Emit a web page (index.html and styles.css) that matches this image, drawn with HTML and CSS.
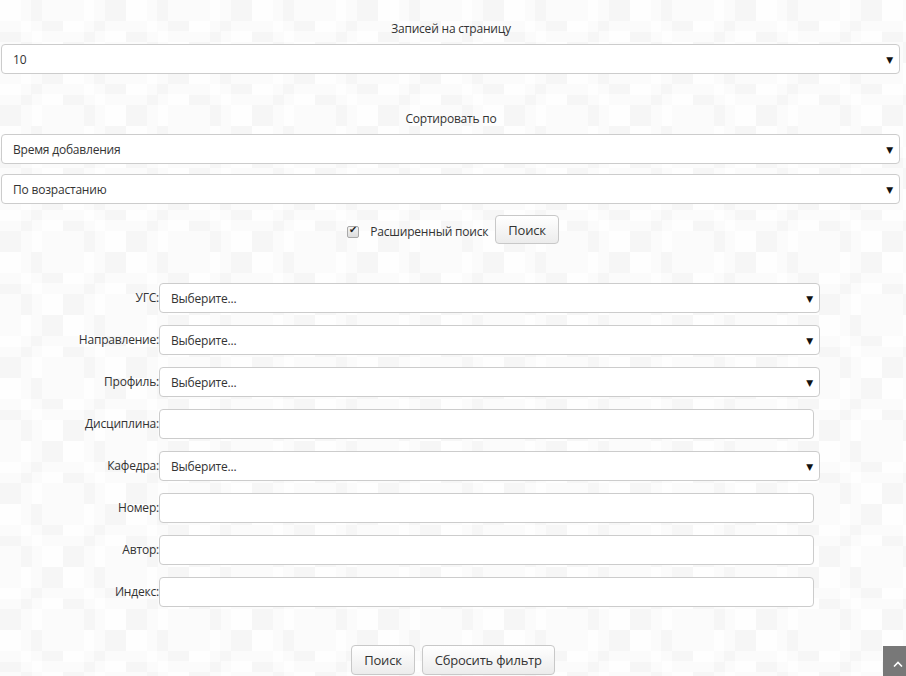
FILE: index.html
```html
<!DOCTYPE html>
<html lang="ru">
<head>
<meta charset="UTF-8">
<title>Поиск</title>
<link rel="stylesheet" href="styles.css">
</head>
<body>

<div class="page">
  <!-- Records per page -->
  <div class="caption">Записей на страницу</div>
  <div class="select wide"><span>10</span><span class="arrow">&#9660;</span></div>

  <!-- Sorting -->
  <div class="caption sort-caption">Сортировать по</div>
  <div class="select wide"><span>Время добавления</span><span class="arrow">&#9660;</span></div>
  <div class="select wide second"><span>По возрастанию</span><span class="arrow">&#9660;</span></div>

  <div class="adv-row">
    <label class="adv-check"><input type="checkbox" checked> Расширенный поиск</label>
    <button class="btn">Поиск</button>
  </div>

  <!-- Advanced filter -->
  <div class="filter">
    <div class="row">
      <label>УГС:</label>
      <div class="select field"><span>Выберите...</span><span class="arrow">&#9660;</span></div>
    </div>
    <div class="row">
      <label>Направление:</label>
      <div class="select field"><span>Выберите...</span><span class="arrow">&#9660;</span></div>
    </div>
    <div class="row">
      <label>Профиль:</label>
      <div class="select field"><span>Выберите...</span><span class="arrow">&#9660;</span></div>
    </div>
    <div class="row">
      <label>Дисциплина:</label>
      <input type="text" class="text-field">
    </div>
    <div class="row">
      <label>Кафедра:</label>
      <div class="select field"><span>Выберите...</span><span class="arrow">&#9660;</span></div>
    </div>
    <div class="row">
      <label>Номер:</label>
      <input type="text" class="text-field">
    </div>
    <div class="row">
      <label>Автор:</label>
      <input type="text" class="text-field">
    </div>
    <div class="row">
      <label>Индекс:</label>
      <input type="text" class="text-field">
    </div>
  </div>

  <div class="actions">
    <button class="btn">Поиск</button>
    <button class="btn">Сбросить фильтр</button>
  </div>
</div>

<!-- scroll to top -->
<div class="to-top">
  <svg width="10" height="6" viewBox="0 0 10 6"><path d="M1 5.5 L5 1.5 L9 5.5" fill="none" stroke="#fff" stroke-width="1.6"/></svg>
</div>

</body>
</html>
```

FILE: styles.css
```css
html, body {
  margin: 0;
  padding: 0;
}
body {
  font-family: "Open Sans", "DejaVu Sans", sans-serif;
  font-size: 12px;
  letter-spacing: -0.2px;
  color: #333;
  background-color: #fafafa;
  background-image:
    repeating-conic-gradient(rgba(0,0,0,0.008) 0 25%, rgba(255,255,255,0.4) 0 50%),
    repeating-conic-gradient(#f8f8f8 0 25%, #fdfdfd 0 50%);
  background-size: 63px 63px, 42px 42px;
  height: 676px;
  overflow: hidden;
}
.page {
  width: 900px;
  margin-left: 1px;
  padding-top: 20px;
}
.caption {
  text-align: center;
  line-height: 17px;
  margin-bottom: 7px;
}
.sort-caption {
  margin-top: 36px;
}
/* fake select boxes */
.select {
  display: flex;
  justify-content: space-between;
  align-items: center;
  height: 30px;
  box-sizing: border-box;
  background: #fff;
  border: 1px solid #ccc;
  border-radius: 4px;
  padding: 0 6px 0 11px;
}
.select .arrow {
  font-size: 9px;
  color: #111;
}
.wide {
  width: 899px;
}
.wide.second {
  margin-top: 10px;
}
.adv-row {
  display: flex;
  justify-content: center;
  align-items: center;
  margin-top: 11px;
  padding-left: 4px;
}
.adv-check {
  display: flex;
  align-items: center;
  margin-right: 7px;
  padding-top: 4px;
}
.adv-check input {
  appearance: none;
  -webkit-appearance: none;
  width: 12px;
  height: 12px;
  margin: 0 11px 0 0;
  border: 1px solid #a8a8a8;
  border-radius: 2px;
  background: linear-gradient(#f4f4f4, #dcdcdc);
  position: relative;
}
.adv-check input:checked::after {
  content: "\2714";
  position: absolute;
  left: 1px;
  top: -3px;
  font-size: 10px;
  color: #222;
}
.btn {
  font-family: "Open Sans", "DejaVu Sans", sans-serif;
  font-size: 13px;
  letter-spacing: -0.2px;
  color: #333;
  height: 29px;
  padding: 0 12px;
  background: linear-gradient(#fff, #ececec);
  border: 1px solid #c8c8c8;
  border-radius: 4px;
  cursor: pointer;
}
.filter {
  margin-top: 39px;
  display: flex;
  flex-direction: column;
  gap: 12px;
}
.row {
  display: flex;
  align-items: center;
  height: 30px;
}
.row label {
  width: 158px;
  text-align: right;
  margin-top: -2px;
}
.field {
  width: 661px;
}
.text-field {
  width: 655px;
  height: 30px;
  box-sizing: border-box;
  border: 1px solid #ccc;
  border-radius: 4px;
  background: #fff;
  margin: 0;
}
.actions {
  display: flex;
  justify-content: center;
  gap: 7px;
  margin-top: 38px;
  padding-left: 4px;
}
.actions .btn {
  height: 30px;
}
.to-top {
  position: fixed;
  right: -7px;
  bottom: 0;
  width: 30px;
  height: 30px;
  background: #787878;
  display: flex;
  justify-content: center;
  align-items: center;
  padding-top: 6px;
  box-sizing: border-box;
}
```
